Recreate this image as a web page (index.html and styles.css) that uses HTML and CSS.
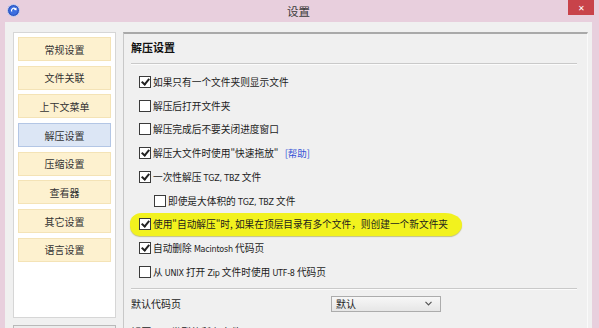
FILE: index.html
```html
<!DOCTYPE html>
<html lang="zh-CN">
<head>
    <meta charset="UTF-8">
    <meta name="viewport" content="width=device-width, initial-scale=1.0">
    <title>设置</title>
    <link rel="stylesheet" href="styles.css">
</head>
<body>
    <div class="window">
        <div class="titlebar">
            <svg class="app-icon" width="13" height="13" viewBox="0 0 13 13">
                <circle cx="6.5" cy="6.5" r="6" fill="#2f57c4" stroke="#c9d2ee" stroke-width="1"/>
                <circle cx="6.5" cy="6.5" r="4.2" fill="#3d6fe0"/>
                <path d="M4 7.5 A3 3 0 0 1 8.6 4.2 L9.4 3.4 L9.6 6.2 L6.8 6 L7.7 5.1 A1.8 1.8 0 0 0 5.3 7.6 Z" fill="#fff"/>
            </svg>
            <span class="title">设置</span>
            <div class="close">&#x2715;</div>
        </div>

        <div class="frame">
            <div class="side">
                <div class="nav">
                    <div class="nav-item">常规设置</div>
                    <div class="nav-item">文件关联</div>
                    <div class="nav-item">上下文菜单</div>
                    <div class="nav-item active">解压设置</div>
                    <div class="nav-item">压缩设置</div>
                    <div class="nav-item">查看器</div>
                    <div class="nav-item">其它设置</div>
                    <div class="nav-item">语言设置</div>
                </div>
                <div class="side-button"></div>
            </div>

            <div class="panel">
                <div class="panel-title">解压设置</div>
                <div class="sep"></div>

                <div class="row"><span class="box checked"></span><span>如果只有一个文件夹则显示文件</span></div>
                <div class="row"><span class="box"></span><span>解压后打开文件夹</span></div>
                <div class="row"><span class="box"></span><span>解压完成后不要关闭进度窗口</span></div>
                <div class="row"><span class="box checked"></span><span>解压大文件时使用"快速拖放" <a class="help">[帮助]</a></span></div>
                <div class="row"><span class="box checked"></span><span>一次性解压 <span class="latin">TGZ, TBZ</span> 文件</span></div>
                <div class="row sub"><span class="box"></span><span>即使是大体积的 <span class="latin">TGZ, TBZ</span> 文件</span></div>
                <div class="row marked"><span class="box checked"></span><span>使用"自动解压"时, 如果在顶层目录有多个文件，则创建一个新文件夹</span></div>
                <div class="row"><span class="box checked"></span><span>自动删除 <span class="latin">Macintosh</span> 代码页</span></div>
                <div class="row"><span class="box"></span><span>从 <span class="latin">UNIX</span> 打开 <span class="latin">Zip</span> 文件时使用 <span class="latin">UTF-8</span> 代码页</span></div>

                <div class="sep sep-low"></div>

                <div class="field">
                    <span class="label">默认代码页</span>
                    <div class="select">
                        <span>默认</span>
                        <svg width="7" height="5" viewBox="0 0 7 5"><path d="M0.5 0.8 L3.5 3.8 L6.5 0.8" fill="none" stroke="#555" stroke-width="1.2"/></svg>
                    </div>
                </div>
                <div class="field">
                    <span class="label">解压以下类型的所有文件</span>
                </div>
            </div>
        </div>
    </div>
</body>
</html>
```

FILE: styles.css
```css
body {
    margin: 0;
    height: 100vh;
    overflow: hidden;
    background-color: #e8cfdd;
    font-family: "Noto Sans CJK SC", "Liberation Sans", sans-serif;
    color: #1c1c1c;
}

.window {
    display: flex;
    flex-direction: column;
    height: 100vh;
}

/* title bar */
.titlebar {
    position: relative;
    height: 22px;
    display: flex;
    align-items: center;
    justify-content: center;
    flex-shrink: 0;
}

.app-icon {
    position: absolute;
    left: 7px;
    top: 4px;
}

.title {
    font-size: 11.5px;
    color: #3a3a3a;
    margin-left: -2px;
}

.close {
    position: absolute;
    top: 0;
    right: 5px;
    width: 26px;
    height: 15px;
    background-color: #c8434a;
    color: #fff;
    font-size: 8px;
    display: flex;
    align-items: center;
    justify-content: center;
}

/* window body */
.frame {
    flex: 1;
    display: flex;
    gap: 7px;
    margin: 0 7px 0 5px;
    padding: 10px 4px 0 8px;
    background-color: #f0f0f0;
    min-height: 0;
}

.side {
    width: 103px;
    flex-shrink: 0;
    display: flex;
    flex-direction: column;
    gap: 7px;
}

.nav {
    height: 286px;
    flex-shrink: 0;
    box-sizing: border-box;
    background-color: #fff;
    border: 1px solid #d6d6d6;
    padding: 4px;
    display: flex;
    flex-direction: column;
    gap: 4.7px;
}

.nav-item {
    height: 24px;
    flex-shrink: 0;
    box-sizing: border-box;
    background-color: #fdf1cf;
    border: 1px solid #f4e3b6;
    font-size: 10px;
    color: #333;
    display: flex;
    align-items: center;
    justify-content: center;
}

.nav-item.active {
    background-color: #dce6f5;
    border-color: #b3c6e5;
}

.side-button {
    height: 24px;
    flex-shrink: 0;
    border: 1px solid #b9b9b9;
    background-color: #ececec;
}

/* right panel */
.panel {
    flex: 1;
    border-top: 2px solid #a9a9a9;
    border-left: 1px solid #c8c8c8;
    border-right: 1px solid #fafafa;
    padding: 5px 10px 0 7px;
    background-color: #f0f0f0;
}

.panel-title {
    font-size: 11px;
    font-weight: bold;
    line-height: 16px;
    margin-bottom: 8px;
    color: #111;
}

.sep {
    height: 1px;
    background-color: #c9c9c9;
    border-bottom: 1px solid #fbfbfb;
    margin-bottom: 5px;
}

.sep-low {
    margin-top: 4px;
    margin-bottom: 0;
}

.row {
    position: relative;
    height: 23.75px;
    display: flex;
    align-items: center;
    padding-left: 8px;
    font-size: 9.7px;
    white-space: nowrap;
}

.row.sub {
    padding-left: 23px;
}

.row .latin {
    font-family: "DejaVu Sans", sans-serif;
    font-size: 8px;
    letter-spacing: -0.2px;
}

.box {
    position: relative;
    width: 10px;
    height: 10px;
    border: 1px solid #3a3a3a;
    background-color: #fff;
    margin-right: 2px;
    flex-shrink: 0;
}

.box.checked::after {
    content: "";
    position: absolute;
    left: 3px;
    top: 0px;
    width: 3px;
    height: 6px;
    border-right: 2px solid #222;
    border-bottom: 2px solid #222;
    transform: rotate(40deg);
}

.help {
    color: #3452d6;
    margin-left: 4px;
    font-size: 9.5px;
}

/* yellow marker stroke */
.row.marked {
    z-index: 0;
}

.row.marked::before {
    content: "";
    position: absolute;
    left: -1px;
    top: 0;
    width: 332px;
    height: 23px;
    background-color: #f2f21e;
    border-radius: 12px 18px 14px 10px / 11px 12px 12px 11px;
    box-shadow: 0 1px 1px rgba(140, 140, 0, 0.45);
    z-index: -1;
}

.field {
    display: flex;
    align-items: center;
    height: 28px;
    font-size: 10px;
}

.label {
    width: 200px;
}

.select {
    width: 110px;
    height: 16px;
    box-sizing: border-box;
    border: 1px solid #acacac;
    background: linear-gradient(#f7f7f7, #e6e6e6);
    display: flex;
    align-items: center;
    justify-content: space-between;
    padding: 0 8px 0 4px;
}
```
